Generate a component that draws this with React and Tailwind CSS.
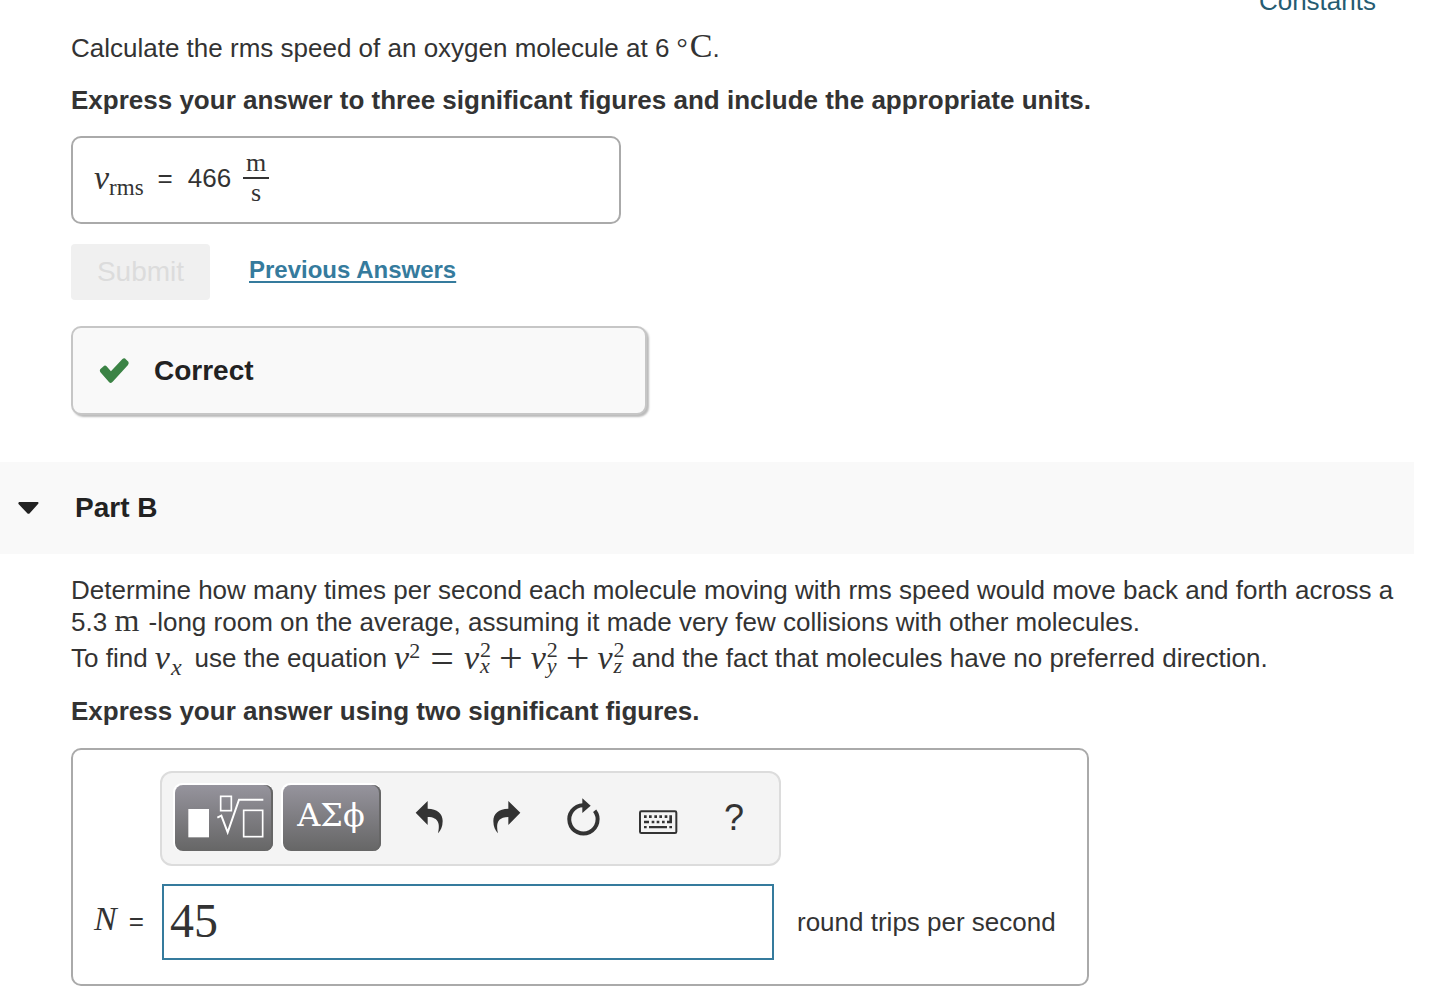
import { useState } from "react";

const serif = "font-['Liberation_Serif',serif]";

function Var({ children }) {
  return (
    <i className="font-['Liberation_Serif',serif] text-[34px] leading-none">
      {children}
    </i>
  );
}

// Squared component: superscript 2 stacked over the axis letter
function Squared({ axis }) {
  return (
    <span className="inline-flex items-center">
      <Var>v</Var>
      <span className="flex flex-col pl-px font-['Liberation_Serif',serif] text-[22px] leading-4">
        <span>2</span>
        <i>{axis}</i>
      </span>
    </span>
  );
}

function Plus() {
  return (
    <span className="px-2 font-['Liberation_Serif',serif] text-[42px] leading-8">
      +
    </span>
  );
}

function ToolButton({ label, children }) {
  return (
    <button
      type="button"
      aria-label={label}
      className="flex h-[66px] w-[76px] items-center justify-center text-[#333]"
    >
      {children}
    </button>
  );
}

function PaletteButton({ label, children }) {
  return (
    <button
      type="button"
      aria-label={label}
      className="flex h-[66px] w-[98px] items-center justify-center rounded-lg bg-linear-to-b from-[#96949d] to-[#666] text-white shadow-[-1px_-1px_0_1px_#fff,inset_-2px_0_0_#666]"
    >
      {children}
    </button>
  );
}

function TemplateIcon() {
  return (
    <svg width="98" height="66" viewBox="45 60 294 198" fill="none" stroke="#fff">
      <rect x="85" y="132" width="62" height="85" fill="#fff" stroke="none" />
      <rect x="182" y="94" width="32" height="43" strokeWidth="5" />
      <path d="M172 158 184 152 203 202 237 104H310" strokeWidth="6" />
      <rect x="251" y="136" width="57" height="79" strokeWidth="5" />
    </svg>
  );
}

function UndoIcon() {
  return (
    <svg width="40" height="40" viewBox="30 99 120 120" fill="currentColor">
      <path d="M47 143 83 108V131C112 131 128 146 128 168C128 185 122 197 114 205C120 180 118 156 83 156V180Z" />
    </svg>
  );
}

function RedoIcon() {
  return (
    <svg width="40" height="40" viewBox="258 99 120 120" fill="currentColor">
      <path d="M361 143 325 108V131C296 131 280 146 280 168C280 185 286 197 294 205C288 180 290 156 325 156V180Z" />
    </svg>
  );
}

function ResetIcon() {
  return (
    <svg width="40" height="40" viewBox="486 99 120 120" fill="none">
      <path d="M584 137A42.5 42.5 0 1 1 549 120.5" stroke="currentColor" strokeWidth="12" />
      <path d="M547 100 572 122 547 144Z" fill="currentColor" />
    </svg>
  );
}

function KeyboardIcon() {
  return (
    <svg width="40" height="40" viewBox="717 99 120 120" fill="currentColor">
      <rect x="723" y="139" width="109" height="65" rx="4" fill="none" stroke="currentColor" strokeWidth="6" />
      <path d="M735 151h8v8h-8zM750 151h8v8h-8zM766 151h8v8h-8zM781 151h8v8h-8zM797 151h8v8h-8zM811 151h8v24h-15v-8h7z" />
      <path d="M735 167h15v8h-15zM758 167h8v8h-8zM773 167h8v8h-8zM789 167h8v8h-8z" />
      <path d="M735 183h8v7h-8zM750 183h54v7h-54zM811 183h8v7h-8z" />
    </svg>
  );
}

function PartA() {
  return (
    <section className="pl-[71px]">
      <p className="mt-[15px]">
        Calculate the rms speed of an oxygen molecule at 6{" "}
        <span className={`${serif} text-[34px] leading-6`}>
          <span className="mr-0.5 text-[28px] leading-6">°</span>C
        </span>
        .
      </p>
      <p className="mt-5 font-bold">
        Express your answer to three significant figures and include the
        appropriate units.
      </p>

      <div className="mt-5 flex h-[88px] max-w-[550px] items-center rounded-[10px] border-2 border-[#aaa] pb-1 pl-[21px]">
        <span className="flex items-baseline">
          <Var>v</Var>
          <sub className={`${serif} text-[23px]`}>rms</sub>
        </span>
        <span className="ml-3.5">=</span>
        <span className="ml-[15px]">466</span>
        <span className={`${serif} ml-3 flex w-[26px] flex-col items-center leading-7`}>
          <span className="w-full border-b-2 border-[#333] text-center">m</span>
          <span>s</span>
        </span>
      </div>

      <div className="mt-5 flex items-start gap-[39px]">
        <button
          type="button"
          disabled
          className="h-14 w-[139px] rounded bg-[#f0f0f0] text-[28px] text-[#dcdcdc]"
        >
          Submit
        </button>
        <a
          href="#previous-answers"
          className="mt-2.5 text-2xl font-bold text-[#357b9d] underline decoration-2 underline-offset-3"
        >
          Previous Answers
        </a>
      </div>

      <div className="mt-[26px] flex h-[89px] max-w-[576px] items-center rounded-[10px] border-2 border-[#c6c6c6] bg-[#f9f9f9] pl-[26px] shadow-[2px_2px_2px_0_#bbb]">
        <svg width="31" height="27" viewBox="104 368 78 68" aria-hidden="true">
          <path
            d="M107 399 117 390Q120 388 123 391L134 404 163 373Q168 369 172 374L178 380Q180 384 177 388L139 430Q134 436 129 431L107 406Q105 402 107 399Z"
            fill="#3b8345"
          />
        </svg>
        <span className="ml-6 text-[28px] font-bold text-[#222]">Correct</span>
      </div>
    </section>
  );
}

function PartB() {
  const [answer, setAnswer] = useState("45");

  return (
    <section className="mt-[47px]">
      <h2 className="mr-[34px] bg-[#f9f9f9] text-[28px] font-bold text-[#222]">
        <button
          type="button"
          aria-expanded="true"
          className="flex h-[92px] w-full items-center pl-[18px] font-bold"
        >
          <svg width="21" height="12" viewBox="0 0 21 12" aria-hidden="true">
            <path d="M1 0H20Q21 1 20 2L11.500 11.500Q10.500 12 9.500 11.500L.5 2Q0 1 1 0Z" fill="#222" />
          </svg>
          <span className="ml-9">Part B</span>
        </button>
      </h2>

      <div className="pr-[34px] pl-[71px]">
        <p className="mt-5">
          Determine how many times per second each molecule moving with rms
          speed would move back and forth across a 5.3{" "}
          <span className={`${serif} mr-0.5 text-[32px] leading-6`}>m</span>{" "}
          -long room on the average, assuming it made very few collisions with
          other molecules.
        </p>
        <div className="flex h-10 items-center whitespace-pre">
          To find{" "}
          <span className="flex items-baseline">
            <Var>v</Var>
            <sub className={`${serif} pl-px text-[24px] italic`}>x</sub>
          </span>
          <span className="ml-[13px]">use the equation </span>
          <span className="flex items-baseline">
            <Var>v</Var>
            <sup className={`${serif} text-[22px]`}>2</sup>
          </span>
          <span className={`${serif} px-2.5 text-[42px] leading-8`}>=</span>
          <Squared axis="x" />
          <Plus />
          <Squared axis="y" />
          <Plus />
          <Squared axis="z" /> and the fact that molecules have no preferred
          direction.
        </div>
        <p className="mt-[17px] font-bold">
          Express your answer using two significant figures.
        </p>

        <div className="mt-[21px] max-w-[1018px] rounded-[10px] border-2 border-[#aaa] pt-[21px] pr-7 pb-6 pl-[21px]">
          <div
            role="toolbar"
            aria-label="Equation tools"
            className="ml-[66px] flex w-fit gap-[11px] rounded-xl border-2 border-[#dcdcdc] bg-[#f4f4f4] pt-3 pr-[7px] pb-[13px] pl-[13px]"
          >
            <div className="flex gap-2.5">
              <PaletteButton label="Templates">
                <TemplateIcon />
              </PaletteButton>
              <PaletteButton label="Symbols">
                <span className="pr-0.5 pb-1.5 font-['DejaVu_Serif',serif] text-[32px] leading-none">
                  ΑΣϕ
                </span>
              </PaletteButton>
            </div>
            <div className="flex">
              <ToolButton label="Undo">
                <UndoIcon />
              </ToolButton>
              <ToolButton label="Redo">
                <RedoIcon />
              </ToolButton>
              <ToolButton label="Reset">
                <ResetIcon />
              </ToolButton>
              <ToolButton label="Keyboard shortcuts">
                <KeyboardIcon />
              </ToolButton>
              <ToolButton label="Help">
                <span className="text-4xl">?</span>
              </ToolButton>
            </div>
          </div>

          <div className="mt-[18px] flex items-center">
            <label
              htmlFor="answer"
              className="flex w-[68px] items-baseline gap-3 pb-1"
            >
              <i className={`${serif} text-[34px]`}>N</i>=
            </label>
            <input
              id="answer"
              value={answer}
              onChange={(e) => setAnswer(e.target.value)}
              className="h-[76px] w-[612px] min-w-0 border-2 border-[#357b9d] px-1.5 pb-1 font-['Liberation_Serif',serif] text-5xl outline-none"
            />
            <span className="ml-[23px] whitespace-nowrap">
              round trips per second
            </span>
          </div>
        </div>
      </div>
    </section>
  );
}

export default function App() {
  return (
    <main className="bg-white pb-3.5 font-['Liberation_Sans',Arial,sans-serif] text-[26px] leading-8 text-[#333]">
      <div className="flex h-[17px] items-end justify-end overflow-hidden pr-[72px]">
        <a href="#constants" className="text-[#255c72]">
          Constants
        </a>
      </div>
      <PartA />
      <PartB />
    </main>
  );
}
